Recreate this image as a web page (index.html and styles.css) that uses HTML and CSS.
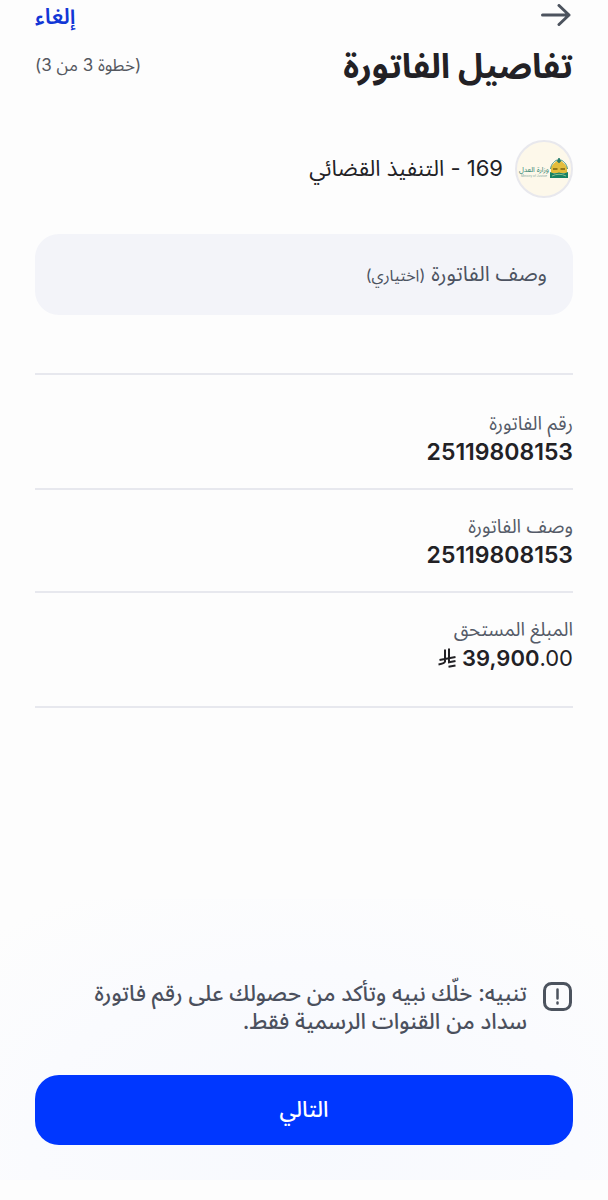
FILE: index.html
```html
<!DOCTYPE html>
<html lang="ar" dir="rtl">
  <head>
    <meta charset="UTF-8" />
    <meta name="viewport" content="width=device-width, initial-scale=1" />
    <title>تفاصيل الفاتورة</title>
    <link rel="stylesheet" href="styles.css">
  </head>
  <body>
    <header>
      <nav class="topbar">
        <button type="button" class="back" aria-label="رجوع">
          <svg width="32" height="24" viewBox="0 0 32 24">
            <path d="M1.500 11H28M18 1.500L28 11L18 20.500" />
          </svg>
        </button>
        <button type="button" class="cancel">إلغاء</button>
      </nav>
      <div class="heading">
        <h1>تفاصيل الفاتورة</h1>
        <span class="step">(خطوة 3 من 3)</span>
      </div>
    </header>

    <main>
      <div class="biller">
        <svg class="logo" width="58" height="58" viewBox="0 0 58 58">
          <circle cx="29" cy="29" r="28" fill="#fdf8ea" stroke="#e8e8ed" stroke-width="2" />
          <path d="M36 33V27C38 24 41 21 44 20C47 21 50 24 52 27V33Z" fill="#e3bd3c" />
          <path d="M35.500 29C36 24 40 20 44 19.500C48 20 52 24 52.500 29" fill="none" stroke="#4b9a88" stroke-width="1" />
          <path d="M44 18V23M42 21H46" stroke="#1f7567" stroke-width="1.500" />
          <path d="M38 29H42.500M45.500 29H50" stroke="#937819" stroke-width="2" />
          <path d="M35 32C39 34 42 33 44 32.500C46 33 49 34 53 32V38H35Z" fill="#188263" />
          <path d="M37 36Q44 32.500 51 36" fill="none" stroke="#8abf8f" stroke-width="1" />
          <text class="logo-name" x="19" y="32" text-anchor="middle">وزارة العدل</text>
          <text class="logo-sub" x="19" y="37" text-anchor="middle">Ministry of Justice</text>
        </svg>
        <span>169 - التنفيذ القضائي</span>
      </div>

      <div class="field">
        <input type="text" id="desc" placeholder=" " />
        <label for="desc">وصف الفاتورة <small>(اختياري)</small></label>
      </div>

      <dl class="details">
        <div class="item">
          <dt>رقم الفاتورة</dt>
          <dd>25119808153</dd>
        </div>
        <div class="item">
          <dt>وصف الفاتورة</dt>
          <dd>25119808153</dd>
        </div>
        <div class="item">
          <dt>المبلغ المستحق</dt>
          <dd class="amount">
            <bdi dir="ltr">39,900<span class="cents">.00</span></bdi>
            <svg width="18" height="20" viewBox="0 0 18 20" role="img" aria-label="ريال">
              <path d="M7 1.500V13.500Q6.500 15.500 0.500 16.500M11 0.500V14.200L17.500 13M1.500 12L17.500 9M10.500 18.800L17.500 17.500" />
            </svg>
          </dd>
        </div>
      </dl>
    </main>

    <footer>
      <div class="notice">
        <svg width="30" height="30" viewBox="0 0 30 30">
          <rect x="1.500" y="1.500" width="26" height="26" rx="7" />
          <path class="mark" d="M14.500 7.500V16.500M14.500 20.500V21.500" />
        </svg>
        <p>تنبيه: خلّك نبيه وتأكد من حصولك على رقم فاتورة سداد من القنوات الرسمية فقط.</p>
      </div>
      <button type="button" class="next">التالي</button>
    </footer>
  </body>
</html>
```
FILE: styles.css
```css
* {
  box-sizing: border-box;
}
body {
  margin: 0;
  min-height: 100vh;
  padding-bottom: 20px;
  display: flex;
  flex-direction: column;
  background: #fdfdfd;
  color: #222125;
  font-family: Inter, "Noto Sans Arabic", "DejaVu Sans", sans-serif;
}
button {
  border: none;
  background: none;
  padding: 0;
  font-family: inherit;
  cursor: pointer;
}
svg {
  flex: none;
}
header,
main {
  padding: 0 35px;
}
.topbar,
.heading {
  display: flex;
  justify-content: space-between;
  align-items: center;
}
.topbar {
  height: 32px;
}
.back svg {
  display: block;
  fill: none;
  stroke: #4c535e;
  stroke-width: 3;
  stroke-linecap: round;
  stroke-linejoin: round;
}
.cancel {
  color: #1237d6;
  font-size: 22px;
  font-weight: 600;
  line-height: 28px;
}
h1 {
  margin: 0;
  font-size: 34px;
  font-weight: 700;
  line-height: 68px;
}
.step {
  font-size: 17px;
  color: #55585f;
}
.biller {
  display: flex;
  align-items: center;
  gap: 12px;
  margin-top: 40px;
  font-size: 22px;
}
.logo-name {
  font-size: 7px;
  fill: #2c8271;
}
.logo-sub {
  font-size: 3px;
  fill: #7fa79c;
}
.field {
  position: relative;
  margin-top: 36px;
}
.field input {
  display: block;
  width: 100%;
  height: 81px;
  padding: 0 26px;
  border: none;
  border-radius: 24px;
  background: #f3f4f9;
  color: inherit;
  font-family: inherit;
  font-size: 21px;
}
/* label sits over the empty input */
.field label {
  position: absolute;
  inset: 0 26px;
  line-height: 80px;
  font-size: 21px;
  color: #4c5361;
  pointer-events: none;
}
.field small {
  font-size: 16px;
}
.field input:not(:placeholder-shown) + label {
  display: none;
}
.details {
  margin: 58px 0 0;
  border-top: 2px solid #e7e8ee;
}
.item {
  padding: 23px 0 22px;
  border-bottom: 2px solid #e7e8ee;
}
.item:first-child {
  padding-top: 35px;
}
.item:last-child {
  padding-bottom: 34px;
}
dt {
  font-size: 19px;
  line-height: 28px;
  color: #555b68;
}
dd {
  margin: 0;
  font-size: 23px;
  font-weight: 600;
  line-height: 28px;
}
.amount {
  display: flex;
  align-items: center;
  gap: 6px;
  font-size: 22px;
}
.amount svg {
  fill: none;
  stroke: #222125;
  stroke-width: 2;
}
.cents {
  font-weight: 400;
}
footer {
  margin-top: auto;
  padding: 80px 35px 35px;
  background: radial-gradient(ellipse 75% 100% at 50% 85%, #f7f9fe 0%, #fafbfe 60%, #fdfdfd 100%);
}
.notice {
  display: flex;
  align-items: flex-start;
  gap: 16px;
  margin-bottom: 40px;
  padding-left: 28px;
}
.notice svg {
  margin-top: 3px;
  fill: none;
  stroke: #4c535e;
  stroke-width: 3;
  stroke-linecap: round;
}
.notice .mark {
  stroke-width: 2.5;
}
.notice p {
  margin: 0;
  font-size: 22px;
  font-weight: 500;
  line-height: 28px;
  color: #4b505d;
}
.next {
  display: block;
  width: 100%;
  height: 70px;
  border-radius: 24px;
  background: #0037ff;
  color: #fff;
  font-size: 22px;
  font-weight: 500;
}
```
